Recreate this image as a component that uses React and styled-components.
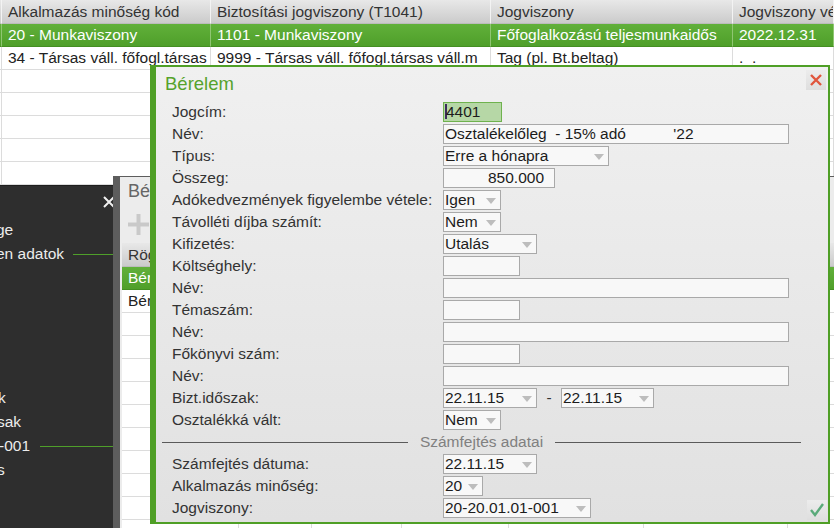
import React from 'react';
import styled, { createGlobalStyle, css } from 'styled-components';

const GlobalStyle = createGlobalStyle`
  *, *::before, *::after { box-sizing: border-box; }
  html, body { margin: 0; padding: 0; background: #fff; }
  body {
    font-family: "Liberation Sans", Arial, sans-serif;
    font-size: 15.5px;
    color: #333;
  }
`;

const Desktop = styled.div`
  position: relative;
  width: 834px;
  height: 528px;
  overflow: hidden;
  background: #fff;
`;

/* ---------- grids (background list + middle window list) ---------- */

const Table = styled.div`
  display: grid;
  grid-template-columns: ${p => p.$cols};
`;

const Cell = styled.div`
  height: 23px;
  line-height: 22px;
  padding-left: ${p => (p.$stub ? 0 : 6)}px;
  white-space: pre;
  overflow: hidden;
  color: #222;
  border-right: 1px solid #dcdcdc;
  border-bottom: 1px solid #dcdcdc;
  ${p => p.$kind === 'head' && css`
    height: 24px;
    line-height: 23px;
    color: #333;
    background: linear-gradient(#e8e8e8, #cbcbcb);
    border-right-color: #f3f3f3;
    border-bottom-color: #bcbcbc;
  `}
  ${p => p.$kind === 'sel' && css`
    color: #fff;
    background: linear-gradient(#61b03a, #4f9f2a);
    border-right-color: #8fc672;
    border-bottom-color: #448f22;
  `}
`;

/* ---------- dark side panel ---------- */

const SidePanel = styled.div`
  position: absolute;
  left: 0;
  top: 185px;
  width: 122px;
  bottom: 0;
  background: #2e2e2e;
  border-top: 1px solid #1e1e1e;
  color: #ececec;
`;

const SideHead = styled.div`
  height: 32px;
  display: flex;
  justify-content: flex-end;
  align-items: center;
  padding-right: 6px;
`;

const SideRow = styled.div`
  height: 24px;
  display: flex;
  align-items: center;
  white-space: nowrap;
  margin-left: ${p => p.$shift || 0}px;
`;

const SideRule = styled.span`
  flex: 1;
  height: 1px;
  margin-left: ${p => p.$gap}px;
  background: #4f9f2a;
`;

/* ---------- middle window ---------- */

const MidWindow = styled.div`
  position: absolute;
  left: 113px;
  top: 176px;
  right: -40px;
  bottom: -40px;
  background: #ececec;
  border-left: 7px solid #5d5d5d;
  border-top: 1px solid #5d5d5d;
`;

const MidTitle = styled.div`
  height: 28px;
  line-height: 28px;
  padding-left: 8px;
  font-size: 18px;
  color: #666;
`;

const MidToolbar = styled.div`
  height: 38px;
  display: flex;
  align-items: center;
  padding-left: 7px;
`;

const MidList = styled.div`
  margin-left: 2px;
  background: #fff;
`;

/* ---------- dialog ---------- */

const Dialog = styled.div`
  position: absolute;
  left: 150px;
  top: 65px;
  width: 680px;
  height: 459px;
  display: flex;
  flex-direction: column;
  background: linear-gradient(#f0f0f0, #e1e1e1);
  border: 2px solid #4f9f26;
  border-left-width: 6px;
`;

const TitleBar = styled.div`
  height: 35px;
  display: flex;
  justify-content: space-between;
  align-items: flex-start;
  padding: 0 2px 0 9px;
`;

const Title = styled.div`
  line-height: 33px;
  font-size: 18.5px;
  color: #55a22c;
`;

const IconButton = styled.div`
  width: 20px;
  height: 20px;
  margin-top: ${p => p.$top || 0}px;
  display: flex;
  align-items: center;
  justify-content: center;
  background: linear-gradient(#ececec, #dedede);
`;

const Body = styled.div`
  flex: 1;
  display: flex;
  padding: 0 1px 2px 6px;
`;

const Form = styled.div`
  width: 639px;
  display: grid;
  grid-template-columns: 281px 1fr;
  grid-auto-rows: 20px;
  row-gap: 2px;
  align-content: start;
`;

const Label = styled.div`
  padding-left: 10px;
  line-height: 20px;
  color: #333;
  white-space: nowrap;
`;

const Control = styled.div`
  display: flex;
  align-items: center;
`;

const Field = styled.div`
  position: relative;
  width: ${p => p.$w}px;
  height: 20px;
  line-height: 18px;
  padding: 0 ${p => (p.$right ? 10 : 1)}px 0 1px;
  text-align: ${p => (p.$right ? 'right' : 'left')};
  white-space: pre;
  overflow: hidden;
  color: #1c1c1c;
  background: #f8f8f8;
  border: 1px solid #a9a9a9;
  ${p => p.$active && css`
    background: #b6d7a6;
    border-color: #6fb24e;
  `}
`;

const Arrow = styled.span`
  position: absolute;
  right: 4px;
  top: 7px;
  width: 0;
  height: 0;
  border-left: 5px solid transparent;
  border-right: 5px solid transparent;
  border-top: 6px solid #bdbdbd;
`;

const Caret = styled.span`
  display: inline-block;
  width: 2px;
  height: 15px;
  margin-right: -1px;
  vertical-align: -2px;
  background: #3c2c5c;
`;

const Dash = styled.span`
  width: 24px;
  text-align: center;
  color: #333;
`;

const Divider = styled.div`
  grid-column: 1 / -1;
  display: flex;
  align-items: center;
  gap: 12px;
  color: #808080;
  &::before, &::after {
    content: '';
    flex: 1;
    height: 1px;
    background: #5a5a5a;
  }
`;

const Actions = styled.div`
  flex: 1;
  display: flex;
  align-items: flex-end;
  justify-content: flex-end;
`;

const Select = ({ w, children }) => (
  <Field $w={w}>
    {children}
    <Arrow />
  </Field>
);

const bgCols = '2px 209px 280px 242px 1fr';
const midCols = '117px 73px 90px 107px 135px 144px 1fr';

const emptyRows = (n, cols) =>
  Array.from({ length: n }).flatMap((_, i) =>
    Array.from({ length: cols }).map((__, j) => <Cell key={`e${i}-${j}`} $stub={j === 0 && cols === 5}> </Cell>)
  );

const App = () => {
  return (
    <>
      <GlobalStyle />
      <Desktop>
        <Table $cols={bgCols}>
          <Cell $kind="head" $stub />
          <Cell $kind="head">Alkalmazás minőség kód</Cell>
          <Cell $kind="head">Biztosítási jogviszony (T1041)</Cell>
          <Cell $kind="head">Jogviszony</Cell>
          <Cell $kind="head">Jogviszony vége</Cell>

          <Cell $kind="sel" $stub />
          <Cell $kind="sel">20 - Munkaviszony</Cell>
          <Cell $kind="sel">1101 - Munkaviszony</Cell>
          <Cell $kind="sel">Főfoglalkozású teljesmunkaidős</Cell>
          <Cell $kind="sel">2022.12.31</Cell>

          <Cell $stub />
          <Cell>34 - Társas váll. főfogl.társas</Cell>
          <Cell>9999 - Társas váll. főfogl.társas váll.m</Cell>
          <Cell>Tag (pl. Bt.beltag)</Cell>
          <Cell>{'.  .'}</Cell>

          {emptyRows(20, 5)}
        </Table>

        <SidePanel>
          <SideHead>
            <svg width="14" height="14" viewBox="0 0 14 14">
              <path d="M2 2 L12 12 M12 2 L2 12" stroke="#f0f0f0" strokeWidth="2" />
            </svg>
          </SideHead>
          <SideRow $shift={-4}>ge</SideRow>
          <SideRow $shift={-4}>
            en adatok
            <SideRule $gap={9} />
          </SideRow>
          <SideRow />
          <SideRow />
          <SideRow />
          <SideRow />
          <SideRow />
          <SideRow $shift={-2}>k</SideRow>
          <SideRow $shift={-3}>sak</SideRow>
          <SideRow $shift={-1}>
            -001
            <SideRule $gap={10} />
          </SideRow>
          <SideRow $shift={-3}>s</SideRow>
        </SidePanel>

        <MidWindow>
          <MidTitle>Bérelem adatok</MidTitle>
          <MidToolbar>
            <svg width="23" height="23" viewBox="0 0 23 23">
              <path d="M11.5 1 V22 M1 11.5 H22" stroke="#c9c9c9" strokeWidth="4" />
            </svg>
          </MidToolbar>
          <MidList>
            <Table $cols={midCols}>
              <Cell $kind="head">Rögzítés</Cell>
              <Cell $kind="head">Jogcím</Cell>
              <Cell $kind="head">Név</Cell>
              <Cell $kind="head">Összeg</Cell>
              <Cell $kind="head">Típus</Cell>
              <Cell $kind="head">Kifizetés</Cell>
              <Cell $kind="head">lll</Cell>

              <Cell $kind="sel">Bérelem</Cell>
              <Cell $kind="sel">4401</Cell>
              <Cell $kind="sel">Osztalék</Cell>
              <Cell $kind="sel">850.000</Cell>
              <Cell $kind="sel">Erre a hónapra</Cell>
              <Cell $kind="sel">Utalás</Cell>
              <Cell $kind="sel"> </Cell>

              <Cell>Bérelem</Cell>
              <Cell> </Cell>
              <Cell> </Cell>
              <Cell> </Cell>
              <Cell> </Cell>
              <Cell> </Cell>
              <Cell> </Cell>

              {emptyRows(12, 7)}
            </Table>
          </MidList>
        </MidWindow>

        <Dialog>
          <TitleBar>
            <Title>Bérelem</Title>
            <IconButton $top={3}>
              <svg width="14" height="14" viewBox="0 0 14 14">
                <path d="M2 2 L12 12 M12 2 L2 12" stroke="#e0553c" strokeWidth="2.4" />
              </svg>
            </IconButton>
          </TitleBar>

          <Body>
            <Form>
              <Label>Jogcím:</Label>
              <Control>
                <Field $w={59} $active><Caret />4401</Field>
              </Control>

              <Label>Név:</Label>
              <Control>
                <Field $w={346}>{"Osztalékelőleg  - 15% adó           '22"}</Field>
              </Control>

              <Label>Típus:</Label>
              <Control><Select w={166}>Erre a hónapra</Select></Control>

              <Label>Összeg:</Label>
              <Control><Field $w={112} $right>850.000</Field></Control>

              <Label>Adókedvezmények figyelembe vétele:</Label>
              <Control><Select w={58}>Igen</Select></Control>

              <Label>Távolléti díjba számít:</Label>
              <Control><Select w={58}>Nem</Select></Control>

              <Label>Kifizetés:</Label>
              <Control><Select w={94}>Utalás</Select></Control>

              <Label>Költséghely:</Label>
              <Control><Field $w={77} /></Control>

              <Label>Név:</Label>
              <Control><Field $w={346} /></Control>

              <Label>Témaszám:</Label>
              <Control><Field $w={77} /></Control>

              <Label>Név:</Label>
              <Control><Field $w={346} /></Control>

              <Label>Főkönyvi szám:</Label>
              <Control><Field $w={77} /></Control>

              <Label>Név:</Label>
              <Control><Field $w={346} /></Control>

              <Label>Bizt.időszak:</Label>
              <Control>
                <Select w={94}>22.11.15</Select>
                <Dash>-</Dash>
                <Select w={93}>22.11.15</Select>
              </Control>

              <Label>Osztalékká vált:</Label>
              <Control><Select w={58}>Nem</Select></Control>

              <Divider>Számfejtés adatai</Divider>

              <Label>Számfejtés dátuma:</Label>
              <Control><Select w={94}>22.11.15</Select></Control>

              <Label>Alkalmazás minőség:</Label>
              <Control><Select w={40}>20</Select></Control>

              <Label>Jogviszony:</Label>
              <Control><Select w={148}>20-20.01.01-001</Select></Control>
            </Form>

            <Actions>
              <IconButton>
                <svg width="20" height="20" viewBox="0 0 20 20">
                  <path d="M4 10 L8 15 L16 4" stroke="#5aaa7a" strokeWidth="2.4" fill="none" />
                </svg>
              </IconButton>
            </Actions>
          </Body>
        </Dialog>
      </Desktop>
    </>
  );
};

export default App;
